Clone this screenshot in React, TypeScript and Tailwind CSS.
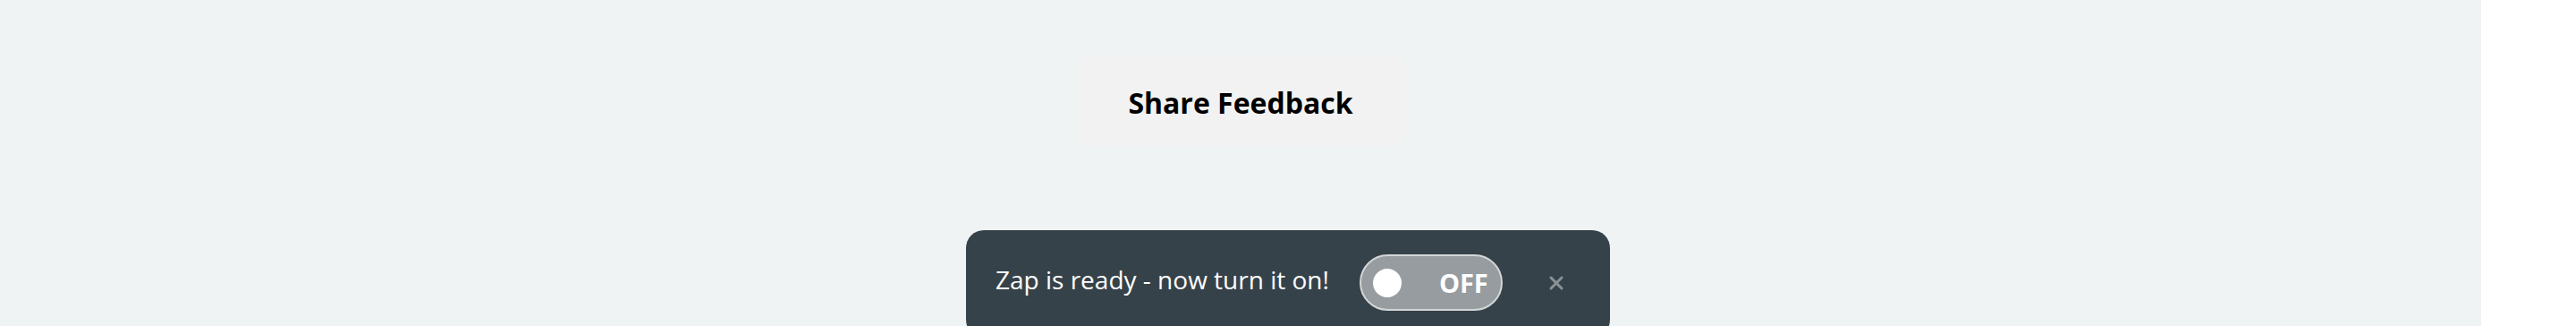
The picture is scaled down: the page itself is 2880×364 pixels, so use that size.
import { X } from "lucide-react";

export default function App() {
  return (
    <div className="flex h-[364px] w-full bg-white font-['Open_Sans',sans-serif]">
      <main className="flex h-full w-[2774px] shrink-0 justify-center bg-[#eff3f4] pt-[63px]">
        <button
          type="button"
          className="h-[100px] w-[371px] rounded-[16px] bg-[#f2f2f2] pt-[3px] text-[32px] font-bold text-black"
        >
          Share Feedback
        </button>
      </main>

      <div className="fixed left-1/2 top-[257px] h-[120px] w-[720px] -translate-x-1/2 rounded-[20px] bg-[#36424a] pl-[33px] pt-[27px]">
        <div className="flex h-[63px] items-center">
          <span className="pb-[8px] text-[28px] text-white">
            Zap is ready - now turn it on!
          </span>
          <div className="ml-[34px] flex h-[63px] w-[160px] items-center rounded-full border-2 border-[#d3d6d7] bg-[#969c9f] pl-[13px]">
            <span className="h-[32px] w-[32px] rounded-full bg-white" />
            <span className="ml-[42px] text-[29px] font-bold text-white">OFF</span>
          </div>
          <X className="ml-[48px] h-[24px] w-[24px] text-[#8a9296]" strokeWidth={3} />
        </div>
      </div>
    </div>
  );
}
